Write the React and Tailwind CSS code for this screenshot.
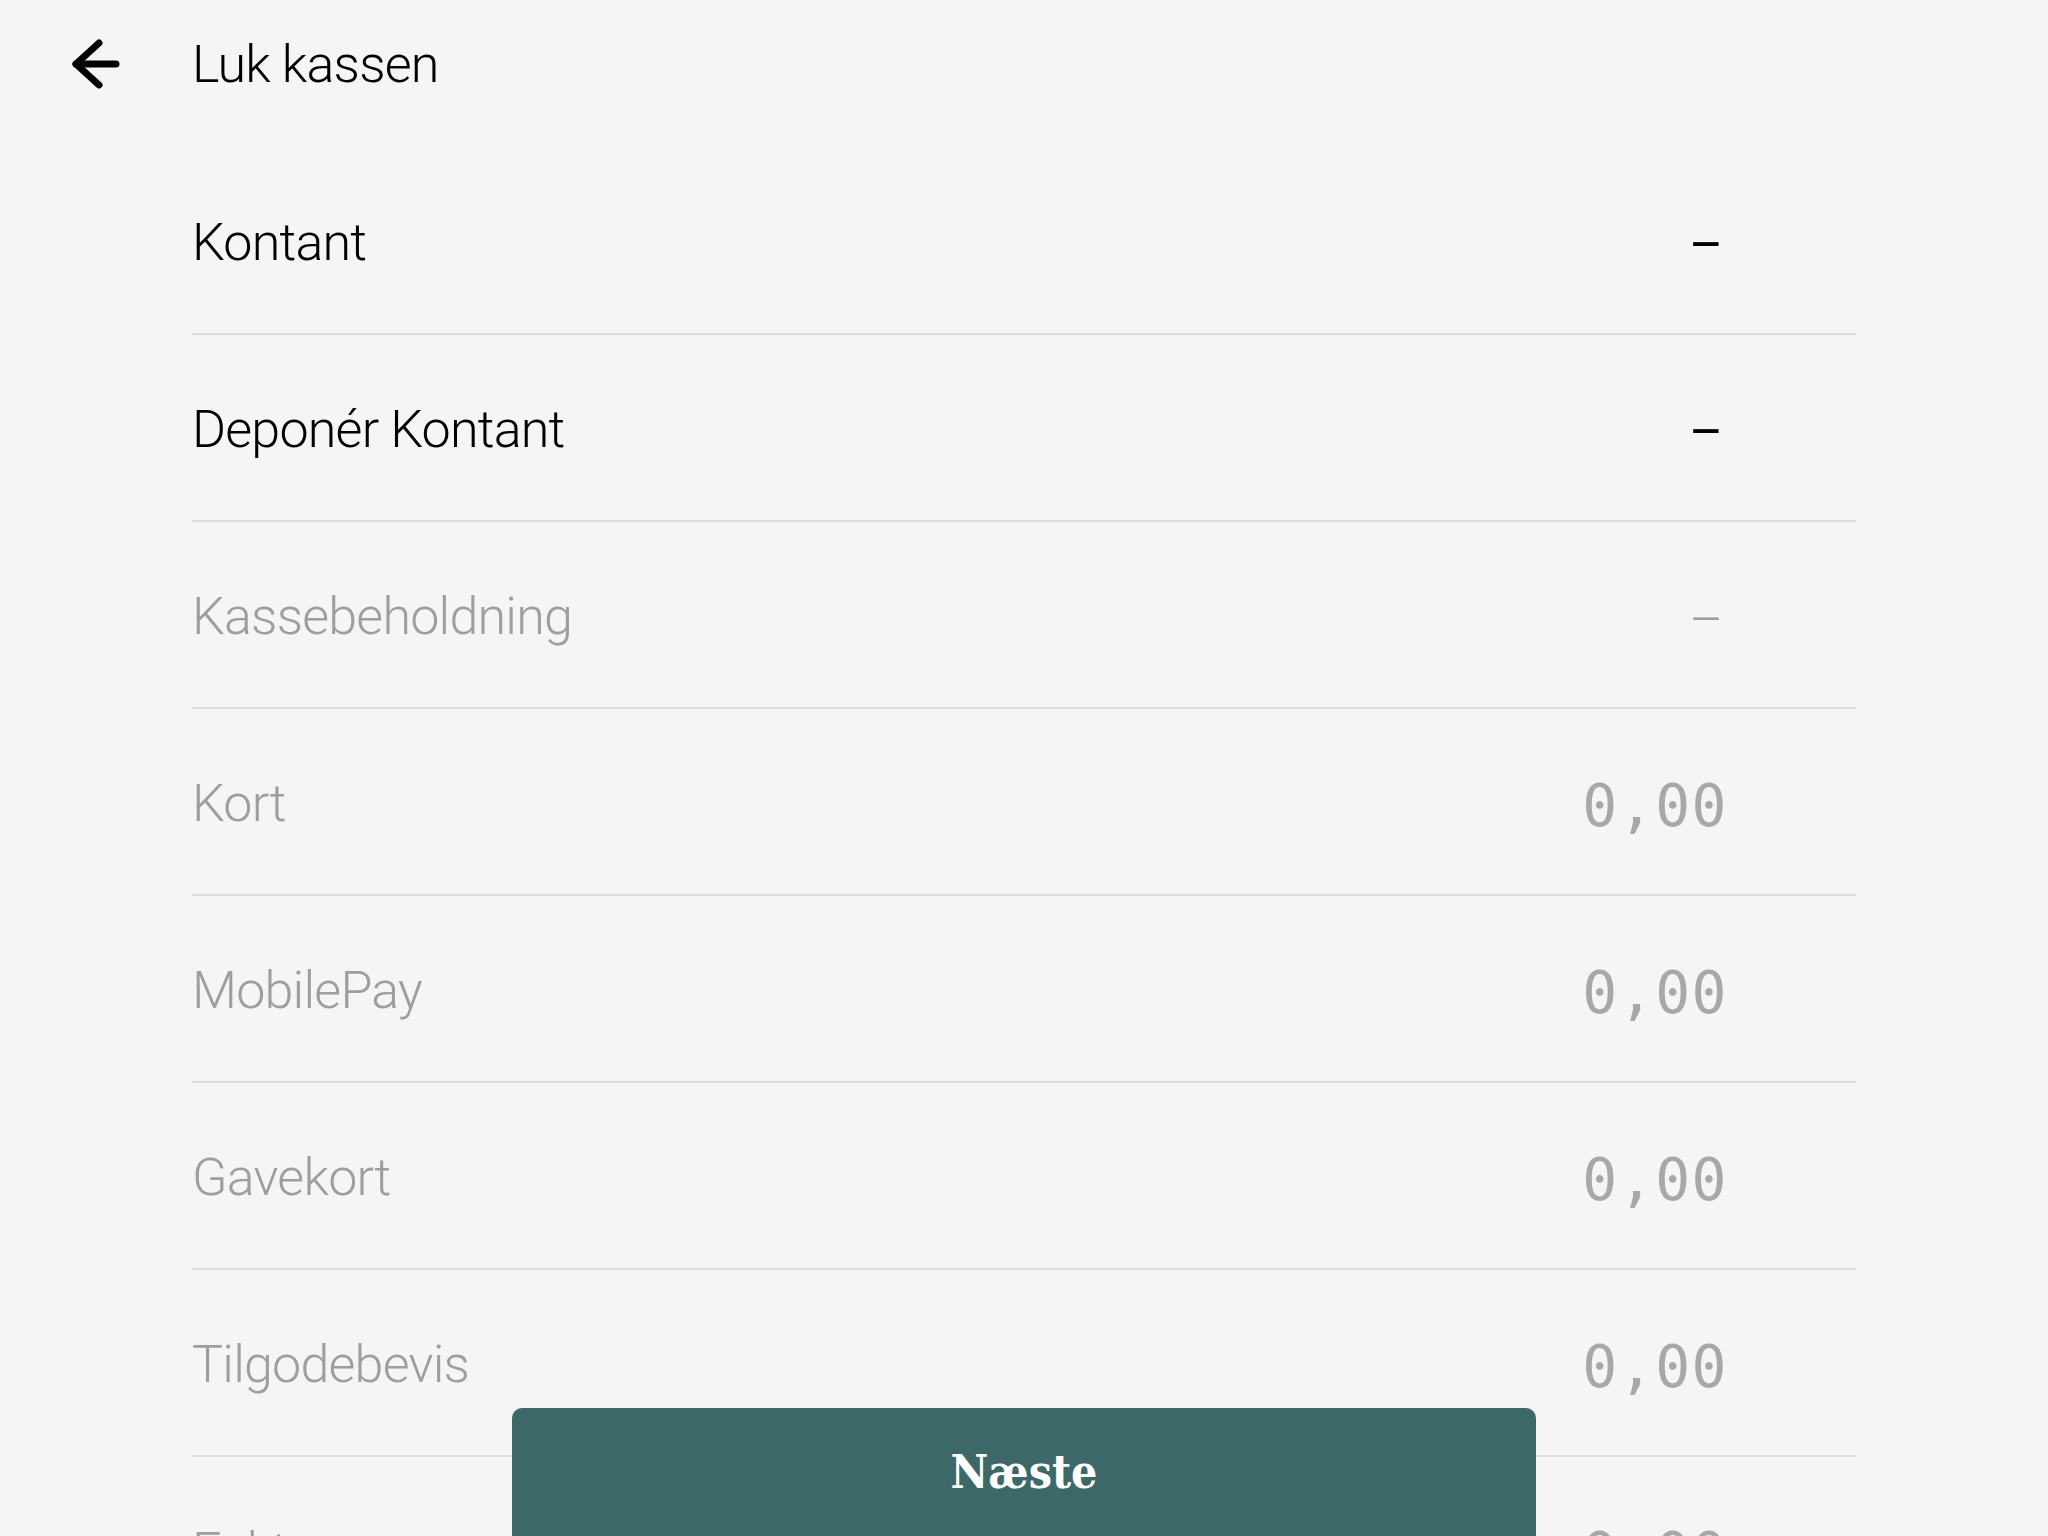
import { useState } from "react";

// Close-register summary: payment types with counted totals.
const rows = [
  { label: "Kontant", value: "–", active: true },
  { label: "Deponér Kontant", value: "–", active: true },
  { label: "Kassebeholdning", value: "–", active: false },
  { label: "Kort", value: "0,00", active: false },
  { label: "MobilePay", value: "0,00", active: false },
  { label: "Gavekort", value: "0,00", active: false },
  { label: "Tilgodebevis", value: "0,00", active: false },
  { label: "Faktura", value: "0,00", active: false },
];

function BackArrow() {
  return (
    <svg
      viewBox="0 0 48 52"
      className="h-[52px] w-[48px] shrink-0"
      fill="none"
      stroke="currentColor"
      strokeWidth="7"
      strokeLinecap="round"
      strokeLinejoin="round"
    >
      <path d="M4 26H44" />
      <path d="M27 5L4 26L27 47" />
    </svg>
  );
}

export default function App() {
  const [step] = useState(0);

  return (
    <div className="relative h-screen overflow-hidden bg-[#f5f5f5] font-['Roboto',sans-serif] text-black">
      <header className="flex h-[128px] items-center pl-[72px]">
        <button type="button" className="text-black" aria-label="Tilbage">
          <BackArrow />
        </button>
        <h1 className="ml-[72px] pt-[2px] text-[52px] leading-none font-light tracking-[-0.8px]">
          Luk kassen
        </h1>
      </header>

      <div className="px-[192px] pt-[20px]">
        {rows.map((r) => (
          <div
            key={r.label}
            className="flex h-[187px] items-center justify-between border-b-2 border-[#dedede]"
          >
            <span
              className={
                r.active
                  ? "pt-[5px] text-[52px] leading-none font-light tracking-[-0.8px] text-black"
                  : "pt-[5px] text-[52px] leading-none font-light tracking-[-0.8px] text-[#9e9e9e]"
              }
            >
              {r.label}
            </span>
            {r.value === "–" ? (
              <span
                className={
                  r.active
                    ? "mr-[133px] pt-[10px] text-[52px] leading-none text-black"
                    : "mr-[133px] pt-[10px] text-[52px] leading-none font-light text-[#9e9e9e]"
                }
              >
                –
              </span>
            ) : (
              <span className="mr-[128px] pt-[8px] font-['DejaVu_Sans_Mono',monospace] text-[58px] leading-none tracking-[1.5px] text-[#a8a8a8]">
                {r.value}
              </span>
            )}
          </div>
        ))}
      </div>

      <button
        type="button"
        disabled={step > 0}
        className="absolute bottom-0 left-1/2 flex h-[128px] w-[1024px] -translate-x-1/2 items-center justify-center rounded-t-[10px] bg-[#3d6868] font-['DejaVu_Serif_Condensed','DejaVu_Serif',serif] text-[46px] font-bold text-white"
      >
        Næste
      </button>
    </div>
  );
}
